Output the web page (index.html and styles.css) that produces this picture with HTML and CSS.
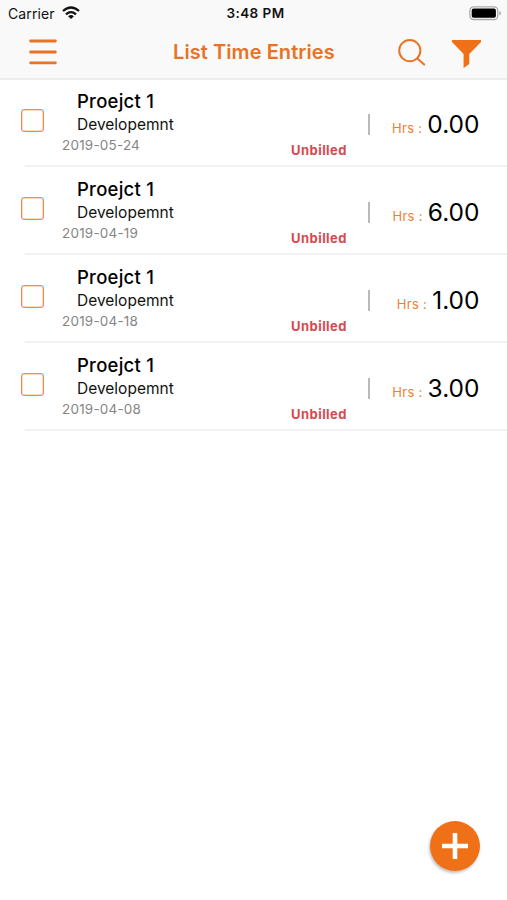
FILE: index.html
```
<!DOCTYPE html>
<html lang="en">
<head>
<meta charset="utf-8">
<title>List Time Entries</title>
<link rel="stylesheet" href="styles.css">
</head>
<body>
<header class="header">
  <div class="status-bar">
    <div class="carrier"><span>Carrier</span>
      <svg class="wifi" width="18" height="14" viewBox="0 0 18 14" fill="none" stroke="#111" stroke-width="2.3"><path d="M1 5Q9-2 17 5M4 8.3Q9 4 14 8.3"/><path d="M6.1 10.2Q9 7.8 11.9 10.2L9 13.1Z" fill="#111" stroke="none"/></svg>
    </div>
    <span class="clock">3:48 PM</span>
    <svg class="battery" width="33" height="15" viewBox="0 0 33 15"><rect x=".9" y=".9" width="27.8" height="12.6" rx="3.5" fill="#fff" stroke="#aaa" stroke-width="1.3"/><rect x="2.7" y="2.6" width="24.2" height="9.2" rx="1.8" fill="#000"/><path d="M30.4 5Q32 5.3 32 7.2T30.4 9.4Z" fill="#aaa"/></svg>
  </div>
  <nav class="nav-bar">
    <svg class="menu" width="28" height="26" viewBox="0 0 28 26" stroke="#e87327" stroke-width="2.8" stroke-linecap="round"><path d="M1.6 2H26.4M1.6 13H26.4M1.6 23.8H26.4"/></svg>
    <h1 class="title">List Time Entries</h1>
    <svg class="search" width="28" height="27" viewBox="0 0 28 27" fill="none" stroke="#e87327" stroke-width="2"><circle cx="11.8" cy="11.6" r="10.6"/><path d="M19 19.2L26.8 26"/></svg>
    <svg class="filter" width="29" height="28" viewBox="0 0 29 28" fill="#f07018"><path d="M0 0H29V2L17.3 14V24L11.6 28V14L0 2Z"/></svg>
  </nav>
</header>
<main class="entries">
  <article class="entry">
    <span class="checkbox"></span>
    <div class="info"><h2 class="project">Proejct 1</h2><p class="task">Developemnt</p><p class="date">2019-05-24</p></div>
    <span class="billing">Unbilled</span><span class="divider"></span>
    <div class="hours"><span class="label">Hrs :</span><span class="amount">0.00</span></div>
  </article>
  <article class="entry">
    <span class="checkbox"></span>
    <div class="info"><h2 class="project">Proejct 1</h2><p class="task">Developemnt</p><p class="date">2019-04-19</p></div>
    <span class="billing">Unbilled</span><span class="divider"></span>
    <div class="hours"><span class="label">Hrs :</span><span class="amount">6.00</span></div>
  </article>
  <article class="entry">
    <span class="checkbox"></span>
    <div class="info"><h2 class="project">Proejct 1</h2><p class="task">Developemnt</p><p class="date">2019-04-18</p></div>
    <span class="billing">Unbilled</span><span class="divider"></span>
    <div class="hours"><span class="label">Hrs :</span><span class="amount">1.00</span></div>
  </article>
  <article class="entry">
    <span class="checkbox"></span>
    <div class="info"><h2 class="project">Proejct 1</h2><p class="task">Developemnt</p><p class="date">2019-04-08</p></div>
    <span class="billing">Unbilled</span><span class="divider"></span>
    <div class="hours"><span class="label">Hrs :</span><span class="amount">3.00</span></div>
  </article>
</main>
<div class="add"><svg width="26" height="26" viewBox="0 0 26 26" stroke="#fff" stroke-width="4.6"><path d="M13 0V26M0 13H26"/></svg></div>
</body>
</html>
```
FILE: styles.css
```
* { box-sizing: border-box; }
body {
  margin: 0;
  min-height: 900px;
  background: #fff;
  color: #111;
  font-family: Inter, "Liberation Sans", sans-serif;
}
h1, h2, p { margin: 0; }
svg { display: block; }

.header {
  height: 80px;
  background: #f9f9f9;
  border-bottom: 2px solid #ededed;
}
.status-bar {
  display: grid;
  grid-template-columns: 1fr auto 1fr;
  align-items: center;
  height: 27px;
  padding: 0 5px 0 8px;
  font-size: 14px;
  line-height: 27px;
}
.carrier { display: flex; align-items: center; gap: 7px; letter-spacing: 0.1px; }
.wifi { margin-bottom: 2px; }
.clock {
  padding: 0 0 0 1px;
  font-size: 13.5px;
  font-weight: 600;
  letter-spacing: 0.45px;
}
.battery { justify-self: end; margin-right: 0.5px; }
.nav-bar {
  display: flex;
  align-items: center;
  height: 50px;
  padding: 0 26px 0 29px;
}
.title {
  width: 163px;
  margin-left: 116px;
  color: #e87327;
  font-size: 20px;
  font-weight: 600;
  line-height: 50px;
  letter-spacing: 0.07px;
  white-space: nowrap;
}
.search { margin-left: 62px; }
.filter { margin-left: auto; margin-top: 3px; }

.entries { margin-top: -1px; }
.entry {
  display: grid;
  grid-template-columns: 37px 229px 76px 3px 1fr;
  height: 88px;
  margin-left: 25px;
  padding-right: 27.5px;
  border-bottom: 2px solid #f2f2f2;
}
.checkbox {
  width: 23px;
  height: 23px;
  margin: 30px 0 0 -4px;
  border: 1px solid #f08a48;
  border-radius: 3px;
  box-shadow: inset 0 0 0 0.5px #f6b58c;
}
.info { padding-top: 10px; white-space: nowrap; }
.project {
  padding-left: 15px;
  color: #000;
  font-size: 18.5px;
  font-weight: 500;
  line-height: 25px;
  letter-spacing: 0.25px;
}
.task { padding-left: 15px; font-size: 15.5px; line-height: 21px; }
.date { color: #858585; font-size: 13.5px; line-height: 20px; letter-spacing: 0.2px; }
.billing {
  margin-top: 61px;
  color: #d54a50;
  font-size: 13px;
  font-weight: 700;
  line-height: 20px;
  letter-spacing: 0.45px;
}
.divider { width: 2.5px; height: 21px; margin: 35px 0 0 0.5px; background: #bababa; }
.hours {
  display: flex;
  justify-content: flex-end;
  align-items: baseline;
  gap: 5px;
  height: 36px;
  margin-top: 27px;
  line-height: 36px;
}
.label { color: #f08030; font-size: 13px; letter-spacing: 0.3px; }
.amount { color: #000; font-size: 24.5px; }
.add {
  position: fixed;
  right: 27px;
  bottom: 29px;
  display: flex;
  align-items: center;
  justify-content: center;
  width: 50px;
  height: 50px;
  border-radius: 50%;
  background: #f07018;
  box-shadow: -1px 2px 3px rgba(0, 0, 0, 0.25);
}
```
